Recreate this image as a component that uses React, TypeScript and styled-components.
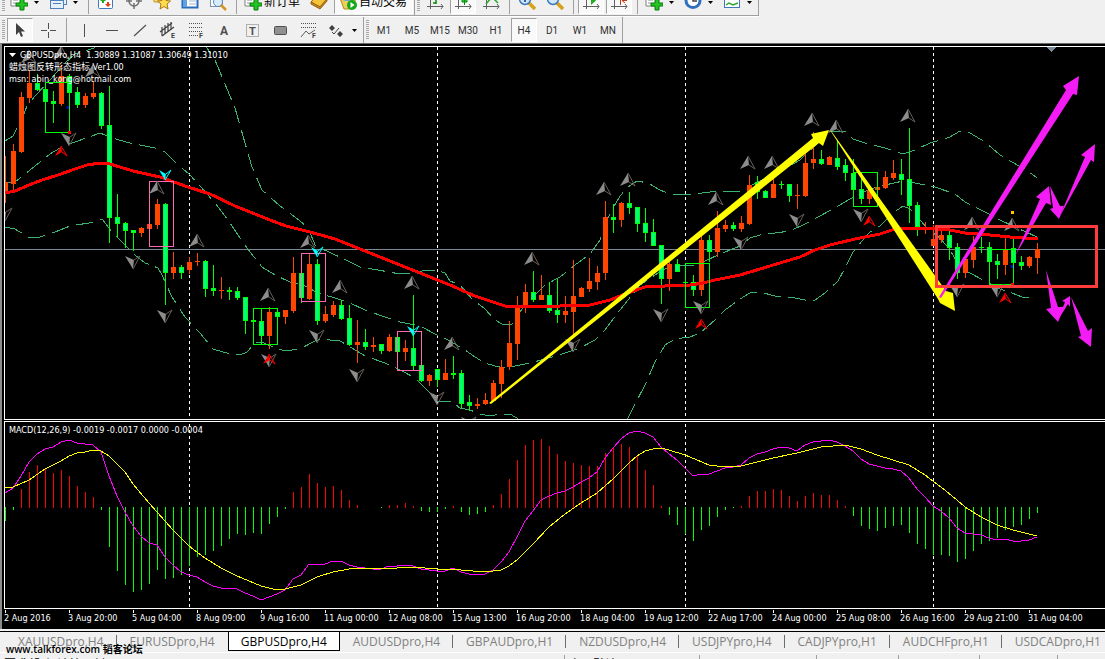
import React from "react";
import styled, { createGlobalStyle, css } from "styled-components";

const GlobalStyle = createGlobalStyle`
  * { box-sizing: border-box; }
  html, body, #root { height: 100%; }
  body {
    margin: 0;
    overflow: hidden;
    background: #f0f0f0;
    font-family: Roboto, "Noto Sans CJK SC", sans-serif;
    font-size: 10px;
    line-height: 13px;
  }
  button { font: inherit; color: inherit; border: 0; padding: 0; margin: 0; background: none; }
  svg { display: block; }
`;

const Page = styled.div`
  display: flex;
  flex-direction: column;
  min-height: 100%;
`;

const ToolbarRow = styled.div<{ $clipped?: boolean }>`
  display: flex;
  align-items: ${(p) => (p.$clipped ? "flex-end" : "stretch")};
  height: ${(p) => (p.$clipped ? 17 : 26)}px;
  overflow: hidden;
`;

const ToolGroup = styled.div`
  display: flex;
  flex: none;
  height: 26px;
  padding: 1px 0 1px 2px;
  border-right: 1px solid #a0a0a0;
`;

const StandardBars = styled.div`
  display: flex;
  flex: none;
  border-bottom: 1px solid #a0a0a0;
  box-shadow: 0 1px 0 #ffffff;
  margin-bottom: 1px;
`;

const Grip = styled.span`
  flex: none;
  width: 3px;
  margin: 2px 1px 2px 0;
  background: repeating-linear-gradient(#a8a8a8 0 1px, #f0f0f0 1px 2px);
`;

const Divider = styled.span`
  flex: none;
  width: 1px;
  margin: 0 3px 0 4px;
  background: #a0a0a0;
`;

const ToolButton = styled.button<{ $width?: number; $pressed?: boolean; $wide?: boolean }>`
  display: flex;
  flex: none;
  align-items: center;
  justify-content: ${(p) => (p.$wide ? "flex-start" : "center")};
  gap: 2px;
  width: ${(p) => (p.$wide ? "auto" : `${p.$width ?? 28}px`)};
  padding: ${(p) => (p.$wide ? "0 5px 0 4px" : "0")};
  color: #000000;
  font-size: 12px;
  white-space: nowrap;
  ${(p) =>
    p.$pressed &&
    css`
      width: ${p.$wide ? "auto" : "26px"};
      margin: 0 1px;
      background: #f9f9f9;
      border: 1px solid #a0a0a0;
      border-right-color: #ffffff;
      border-bottom-color: #ffffff;
    `}
`;

const PeriodButton = styled(ToolButton)`
  font-size: 10px;
  color: #303030;
`;

const CaretButton = styled.button`
  display: flex;
  flex: none;
  align-items: center;
  width: 13px;
  padding-left: 2px;
`;

const ChartFrame = styled.main`
  display: flex;
  flex-direction: column;
  gap: 1px;
  padding: 2px 0 0 2px;
  border-top: 1px solid #696969;
  border-left: 2px solid #8c8c8c;
  background: #000000;
  color: #ffffff;
  font-family: "DejaVu Sans Condensed", "Noto Sans CJK SC", sans-serif;
  font-size: 9px;
`;

const Pane = styled.section<{ $height: number }>`
  position: relative;
  height: ${(p) => p.$height}px;
  border: 1px solid #ffffff;
  border-right: 0;
  overflow: hidden;
`;

const Plot = styled.svg`
  width: 100%;
  height: 100%;
`;

const PaneCaption = styled.div`
  position: absolute;
  top: 2px;
  left: 4px;
  white-space: pre;
`;

const CaptionLine = styled.div`
  display: flex;
  align-items: center;
  gap: 4px;
  height: 12px;
`;

const TimeAxis = styled.div`
  display: flex;
  height: 19px;
  overflow: hidden;
`;

const TimeLabel = styled.span`
  flex: none;
  width: 64px;
  padding-top: 2px;
  white-space: nowrap;
  background: linear-gradient(#ffffff, #ffffff) 1px 0 / 1px 3px no-repeat;
`;

const TabStrip = styled.nav`
  position: relative;
  display: flex;
  height: 22px;
  margin-top: 2px;
  padding-left: 5px;
  border-top: 1px solid #000000;
  border-bottom: 1px solid #ffffff;
`;

const Tab = styled.button<{ $active?: boolean; $divided?: boolean }>`
  position: relative;
  flex: none;
  height: 19px;
  padding: 0 13px;
  font-family: "Open Sans", sans-serif;
  font-size: 12px;
  line-height: 19px;
  white-space: nowrap;
  color: #808080;
  ${(p) =>
    p.$divided &&
    css`
      background: linear-gradient(#6d6d6d, #6d6d6d) 100% 3px / 1px 13px no-repeat;
    `}
  ${(p) =>
    p.$active &&
    css`
      color: #000000;
      background: #ffffff;
      border: 1px solid #000000;
      border-top: 0;
      padding: 0 12px;
    `}
`;

const Watermark = styled.span`
  position: absolute;
  left: 6px;
  top: 10px;
  color: #000000;
  font-family: "Open Sans", "Noto Sans CJK SC", sans-serif;
  font-size: 10px;
  font-weight: 600;
  line-height: 14px;
  white-space: nowrap;
`;

const StatusBar = styled.footer`
  display: flex;
  height: 7px;
  padding-top: 2px;
  overflow: hidden;
  color: #000000;
  font-size: 12px;
  line-height: 20px;
`;

const StatusCell = styled.span<{ $width: number }>`
  flex: none;
  width: ${(p) => p.$width}px;
  height: 18px;
  padding-left: 4px;
  border-right: 1px solid #a0a0a0;
  white-space: nowrap;
`;

/* ---------- chart data ---------- */

const STEP = 8;
const FIRST_X = 5;

type Candle = [dir: "u" | "d", top: number, bottom: number, high: number, low: number];

const candles: Candle[] = [
  ["u",182,193,156,203],["u",151,184,144,191],["u",97,152,92,153],["u",83,98,70,103],
  ["d",83,90,74,91],["d",89,102,85,103],["d",101,104,91,123],["u",76,104,65,106],
  ["d",76,93,74,100],["d",92,105,87,108],["u",96,105,93,108],["u",93,97,81,99],
  ["d",93,126,92,129],["d",125,218,86,243],["d",217,224,194,237],["d",223,231,222,248],
  ["d",230,233,230,251],["u",228,233,227,237],["u",224,229,215,230],["u",204,225,199,229],
  ["d",204,273,203,305],["u",267,273,252,279],["d",267,273,265,279],["u",262,270,257,274],
  ["u",261,262,253,266],["d",261,289,260,297],["d",288,291,265,296],["u",290,291,277,299],
  ["d",290,292,287,300],["d",291,298,287,300],["d",297,321,297,334],["d",320,322,318,324],
  ["d",321,336,309,344],["u",312,336,307,349],["d",312,317,310,318],["u",310,317,310,324],
  ["u",273,311,257,313],["d",273,298,273,303],["u",264,299,253,300],["d",264,321,259,325],
  ["u",314,321,306,323],["u",305,315,301,317],["d",305,319,300,320],["d",318,345,305,346],
  ["u",342,345,320,363],["d",342,347,329,350],["u",345,347,337,352],["d",344,351,344,354],
  ["u",337,351,334,352],["d",337,352,336,353],["u",348,352,340,361],["d",348,366,295,370],
  ["d",365,381,364,382],["u",375,381,374,386],["d",369,380,369,387],["u",373,380,359,380],
  ["d",373,375,356,379],["d",373,404,370,408],["d",402,406,395,411],["u",404,406,398,409],
  ["u",400,404,393,405],["u",383,401,380,402],["u",367,384,360,398],["u",343,367,321,370],
  ["u",307,344,296,360],["u",292,306,284,313],["d",292,300,271,302],["u",295,300,275,300],
  ["d",295,311,282,313],["d",310,315,279,323],["u",311,315,296,323],["u",296,312,260,337],
  ["u",288,297,287,297],["u",281,289,258,292],["u",273,282,266,290],["u",217,273,201,280],
  ["d",217,220,204,233],["u",203,220,202,227],["d",203,208,192,214],["d",207,224,207,232],
  ["d",223,233,208,242],["d",232,246,219,246],["d",245,279,245,304],["u",264,279,262,291],
  ["d",264,272,259,272],["d",282,283,280,284],["d",282,290,275,296],["u",240,290,236,296],
  ["d",240,252,235,262],["u",228,252,211,257],["u",225,229,220,232],["d",225,229,222,231],
  ["u",223,229,216,232],["u",185,224,175,225],["d",182,192,176,199],["d",191,198,190,198],
  ["u",184,198,172,198],["d",184,185,181,189],["d",184,196,184,202],["u",195,196,184,209],
  ["u",163,196,150,197],["u",159,163,132,169],["d",159,164,150,165],["u",157,165,156,165],
  ["d",158,167,140,170],["d",165,173,159,181],["d",173,190,159,199],["d",189,199,173,204],
  ["u",190,199,190,204],["u",187,190,187,190],["u",177,188,171,189],["u",173,178,160,180],
  ["d",174,180,159,195],["d",179,206,128,223],["d",205,227,202,236],["u",227,228,222,234],
  ["u",239,246,225,246],["u",235,240,230,243],["d",235,248,231,260],["d",247,273,243,279],
  ["u",259,273,255,278],["u",247,260,236,268],["d",247,248,237,253],["d",247,262,242,264],
  ["d",261,265,254,279],["u",249,265,238,275],["d",248,263,238,280],["d",262,266,256,270],
  ["u",257,266,256,268],["u",249,258,243,274],
];

const ZERO = 507;

const histogram = [
  521,510,489,472,465,468,473,470,476,486,492,497,510,547,571,585,592,590,584,570,579,578,575,566,
  557,555,551,546,539,534,535,533,534,524,517,509,492,487,474,483,487,486,490,500,505,507,507,508,
  505,505,503,506,511,512,512,509,506,512,515,514,512,505,494,479,460,445,440,439,446,454,461,463,
  465,466,466,453,448,444,447,456,470,485,506,515,525,534,541,530,526,517,510,508,506,496,491,491,
  489,490,496,501,496,493,495,495,500,506,516,526,529,531,528,526,525,533,544,549,555,555,556,562,
  559,551,544,541,538,530,527,525,519,513,
];

const macdLine = [
  493,488,476,462,454,449,447,442,440,443,444,445,452,476,496,512,526,536,543,545,557,565,572,575,
  577,582,586,588,588,589,593,596,600,597,594,590,579,575,564,565,564,561,561,565,567,568,569,569,
  566,566,565,566,569,570,571,571,568,572,574,575,574,570,562,552,537,521,511,500,496,493,491,487,
  482,478,472,458,448,439,433,431,433,437,447,454,460,468,476,474,474,471,468,467,465,458,454,452,
  449,447,448,451,445,442,441,440,442,446,451,459,464,466,468,469,471,478,489,497,506,511,518,528,
  533,534,535,538,540,539,541,541,540,537,
];

const signalLine =
  "5,487 13,487 29,480 45,469 61,461 69,456 77,453 85,452 93,450 101,451 109,456 125,472 133,484 149,503 157,512 173,530 189,546 205,558 221,568 237,576 261,586 277,590 285,589 301,585 317,577 333,572 349,569 365,568 381,569 397,568 413,567 437,569 461,570 485,572 501,570 509,566 517,560 533,544 549,527 565,514 581,503 597,493 613,479 629,463 637,456 645,451 653,449 661,448 669,450 685,455 709,465 717,466 741,466 757,462 773,458 797,453 821,447 845,445 861,449 877,455 893,460 909,465 925,475 941,487 957,500 965,507 981,517 997,525 1013,530 1037,536";

const movingAverage =
  "5,193 15,191 29,185 42,180 58,175 75,169 87,165 100,163 110,164 133,171 160,177 188,187 210,194 235,206 260,216 270,220 286,226 310,232 335,239 365,251 400,265 425,275 450,285 475,296 490,301 505,306 530,306 560,306 590,305 610,300 625,294 645,287 665,286 690,285 703,283 715,280 740,275 760,269 780,263 800,257 815,250 830,245 855,239 880,234 895,229 910,228 925,228 950,230 965,233 990,235 1010,237 1025,238 1038,239";

const bands = [
  "5,141 13,136 21,121 27,106 35,96 50,80 65,63 75,54 94,48 100,40",
  "200,40 207,48 215,60 225,84 235,108 245,143 252,167 262,190 280,206 299,220 308,228 316,247 327,251 350,262 360,267 378,270 400,274 415,273 425,270 435,270 445,273 450,281 460,285 472,299 485,309 495,320 502,324 512,324 517,315 530,300 545,285 560,277 575,265 590,254 600,240 607,220 613,208 620,196 628,187 637,181 648,183 660,190 670,194 695,194 710,192 740,191 760,181 780,172 800,160 815,146 830,131 845,131 853,139 865,143 885,148 903,154 915,150 930,143 950,137 960,131 970,133 985,142 1000,155 1012,162 1028,171 1037,178",
  "5,183 15,182 25,174 35,166 50,154 65,145 75,142 100,133 112,138 130,143 155,148 165,152 175,162 190,175 200,186 215,203 228,220 240,238 250,252 262,267 275,275 290,282 305,286 318,293 335,298 350,303 365,310 385,317 400,322 420,326 435,334 450,341 465,350 475,357 485,363 495,366 505,368 515,366 530,363 545,359 565,353 580,348 595,340 605,330 620,310 640,285 655,275 665,269 680,266 695,265 705,261 720,254 740,246 750,238 760,235 790,231 805,224 820,216 840,205 855,196 870,189 885,185 903,181 915,183 935,187 955,194 965,202 985,212 1000,220 1015,227 1037,237",
  "5,227 15,229 28,237 40,237 55,232 70,226 95,222 102,219 112,232 125,245 135,255 145,263 158,268 162,275 172,297 185,317 200,333 213,349 230,354 240,355 247,352 255,343 262,342 275,348 285,351 300,349 313,342 320,339 340,341 352,348 365,356 385,363 400,370 415,378 430,393 437,401 452,402 460,408 470,410 480,414 490,416 500,414 510,414 520,420",
  "627,420 635,404 645,385 655,362 665,345 675,339 690,337 700,333 715,320 725,310 740,299 750,293 760,292 775,296 795,298 805,300 815,300 825,293 838,281 845,268 853,252 862,241 870,232 880,226 893,213 903,206 910,209 920,220 928,229 940,238 950,250 957,262 968,272 985,281 1000,289 1012,293 1022,297 1032,298",
];

const upMarks = [
  [29,50],[61,46],[93,64],[157,181],[197,234],[268,288],[308,235],[340,280],[412,276],[452,337],
  [532,252],[604,182],[628,173],[716,192],[748,156],[772,156],[812,113],[836,120],[908,109],
  [972,217],[1012,218],
];
const downMarks = [
  [5,221],[69,146],[133,269],[165,323],[269,367],[317,343],[357,382],[437,405],[469,430],[573,352],
  [661,322],[701,314],[741,250],[797,227],[861,222],[957,297],[997,297],
];
const redMarks = [[61,146],[269,354],[701,319],[869,216],[1005,293]];
const cyanMarks = [[165,180],[317,257],[413,336]];

const patternBoxes: [number, number, number, number, string][] = [
  [45,82,24,50,"#00ff00"],
  [149,181,24,65,"#ff69b4"],
  [253,308,24,36,"#00ff00"],
  [301,253,24,48,"#ff69b4"],
  [397,331,24,39,"#ff69b4"],
  [685,263,24,44,"#00ff00"],
  [853,172,24,34,"#00ff00"],
  [989,249,24,35,"#00ff00"],
];

const sessionLines = [189, 437, 685, 933];

const yellowArrows = [
  "489,403 813,138 811,134 829,130 823,146 819,143 491,404",
  "830,130 938,299 940,303 955,311 953,293 946,291 832,132",
];

const magentaArrows = [
  "939,297 1066,90 1063,86 1079,76 1077,95 1073,94 941,298",
  "1015,256 1040,199 1036,197 1049,186 1051,205 1046,203",
  "1050,186 1053,208 1050,209 1059,219 1064,206 1060,206",
  "1059,218 1085,157 1081,155 1095,144 1094,162 1091,160",
  "1046,270 1051,308 1046,309 1058,322 1064,307 1058,307",
  "1058,320 1065,302 1062,301 1070,296 1070,307 1068,304",
  "1071,297 1081,336 1078,337 1091,347 1092,328 1088,331",
];

const timeLabels = [
  "2 Aug 2016","3 Aug 20:00","5 Aug 04:00","8 Aug 09:00","9 Aug 16:00","11 Aug 00:00","12 Aug 08:00",
  "15 Aug 13:00","16 Aug 20:00","18 Aug 04:00","19 Aug 12:00","22 Aug 17:00","24 Aug 00:00",
  "25 Aug 08:00","26 Aug 16:00","29 Aug 21:00","31 Aug 04:00",
];

const symbolTabs = [
  "XAUUSDpro,H4","EURUSDpro,H4","GBPUSDpro,H4","AUDUSDpro,H4","GBPAUDpro,H1","NZDUSDpro,H4",
  "USDJPYpro,H4","CADJPYpro,H1","AUDCHFpro,H1","USDCADpro,H1",
];

const periods = ["M1", "M5", "M15", "M30", "H1", "H4", "D1", "W1", "MN"];

const toX = (i: number) => FIRST_X + STEP * i;

/* ---------- chart parts ---------- */

function SessionLines({ from, to }: { from: number; to: number }) {
  return (
    <>
      {sessionLines.map((x) => (
        <line key={x} x1={x + 0.5} x2={x + 0.5} y1={from} y2={to} stroke="#fff" strokeDasharray="3 3" />
      ))}
    </>
  );
}

function FractalMark({ x, y, down }: { x: number; y: number; down?: boolean }) {
  return (
    <g transform={`translate(${x} ${y}) scale(1 ${down ? -1 : 1})`} shapeRendering="auto">
      <path d="M0 0 L-8 13 L1 9 Z" fill="#8c8c8c" />
      <path d="M0 0 L7 13 L1 9" fill="none" stroke="#6a6058" />
    </g>
  );
}

function SmallMark({ x, y, color, down }: { x: number; y: number; color: string; down?: boolean }) {
  return (
    <g transform={`translate(${x} ${y}) scale(1 ${down ? -1 : 1})`} shapeRendering="auto">
      <path d="M0 0 L-6 10 L1 6 Z" fill={color} />
      <path d="M0 0 L6 10 L1 6" fill="none" stroke={color} />
    </g>
  );
}

function PricePlot() {
  return (
    <Plot role="img" aria-label="GBPUSDpro H4 price chart" shapeRendering="crispEdges">
      <g transform="translate(-5 -47)">
        <SessionLines from={47} to={419} />
        <rect x="5" y="249" width="100%" height="1" fill="#778899" />
        {bands.map((points) => (
          <polyline key={points} points={points} fill="none" stroke="#3cb371" strokeDasharray="18 7" />
        ))}
        {candles.map(([dir, top, bottom, high, low], i) => {
          const x = toX(i);
          const line = dir === "u" ? "#ff4500" : "#00ff00";
          const height = Math.max(1, bottom - top);
          return (
            <g key={x}>
              <rect x={x} y={high} width="1" height={low - high} fill={line} />
              <rect x={x - 2} y={top} width="5" height={height} fill={line} />
              {dir === "d" && height > 2 && (
                <rect x={x - 1} y={top + 1} width="3" height={height - 2} fill="#00ff7f" />
              )}
            </g>
          );
        })}
        <polyline points={movingAverage} fill="none" stroke="#ff0000" strokeWidth="3" />
        {patternBoxes.map(([x, y, w, h, color]) => (
          <rect key={x} x={x + 0.5} y={y + 0.5} width={w} height={h} fill="none" stroke={color} />
        ))}
        {upMarks.map(([x, y]) => (
          <FractalMark key={x} x={x} y={y} />
        ))}
        {downMarks.map(([x, y]) => (
          <FractalMark key={x} x={x} y={y} down />
        ))}
        {redMarks.map(([x, y]) => (
          <SmallMark key={x} x={x} y={y} color="#ff0000" />
        ))}
        {cyanMarks.map(([x, y]) => (
          <SmallMark key={x} x={x} y={y} color="#00ffff" down />
        ))}
        <rect x="67" y="106" width="2" height="3" fill="#0000ff" />
        <rect x="68" y="131" width="3" height="3" fill="#ff0000" />
        <rect x="1011" y="265" width="2" height="3" fill="#0000ff" />
        <rect x="1011" y="283" width="3" height="2" fill="#ff0000" />
        <rect x="1011" y="211" width="3" height="3" fill="#ffc800" />
        <path d="M1047 47 H1056 L1051.5 52 Z" fill="#778899" />
        <g shapeRendering="auto">
          {yellowArrows.map((points) => (
            <polygon key={points} points={points} fill="#ffff00" />
          ))}
          {magentaArrows.map((points) => (
            <polygon key={points} points={points} fill="#f41cf4" />
          ))}
        </g>
        <rect x="936.5" y="226.5" width="160" height="60" fill="none" stroke="#ff3b3b" strokeWidth="3" />
      </g>
    </Plot>
  );
}

function MacdPlot() {
  return (
    <Plot role="img" aria-label="MACD indicator" shapeRendering="crispEdges">
      <g transform="translate(-5 -422)">
        <SessionLines from={424} to={608} />
        {histogram.map((y, i) =>
          y > ZERO ? (
            <rect key={i} x={toX(i)} y={ZERO} width="1" height={y - ZERO} fill="#00ff00" />
          ) : y < ZERO ? (
            <rect key={i} x={toX(i)} y={y} width="1" height={ZERO + 1 - y} fill="#ff0000" />
          ) : null
        )}
        <polyline
          points={macdLine.map((y, i) => `${toX(i)},${y}`).join(" ")}
          fill="none"
          stroke="#ff00ff"
        />
        <polyline points={signalLine} fill="none" stroke="#ffff00" />
      </g>
    </Plot>
  );
}

/* ---------- toolbar icons ---------- */

const Svg = ({ children, w = 18, h = 18 }: { children: React.ReactNode; w?: number; h?: number }) => (
  <svg width={w} height={h} viewBox={`0 0 ${w} ${h}`} aria-hidden="true">
    {children}
  </svg>
);

const plus = (
  <path d="M10 6 h4 v4 h4 v3 h-4 v4 h-4 v-4 h-4 v-3 h4 z" fill="#22c522" stroke="#0a7a0a" strokeWidth="1" />
);

const NewChartIcon = () => (
  <Svg>
    <path d="M1 0 H12 V13 H1 Z" fill="#fff" stroke="#808080" />
    <path d="M3 4 h7 M3 7 h5 M3 10 h3" stroke="#909090" />
    {plus}
  </Svg>
);
const WindowsIcon = () => (
  <Svg>
    <rect x="4.5" y="2.5" width="13" height="9" fill="#e6f0fb" stroke="#4f81bd" />
    <rect x="1.5" y="7.5" width="13" height="8" fill="#e6f0fb" stroke="#4f81bd" />
    <path d="M4 10.500 h8" stroke="#4f81bd" />
  </Svg>
);
const MarketIcon = () => (
  <Svg>
    <rect x="1.500" y="0" width="14" height="15.500" rx="1" fill="#fff" stroke="#3f78bd" />
    <path d="M6 5 l3 3 h-2 v2 h-2 v-2 h-2 z" fill="#1fae1f" />
    <path d="M11 14 l-3 -3 h2 v-2 h2 v2 h2 z" fill="#e23b12" />
    <path d="M11 3 l2 2 l-2 2 l-2 -2 z" fill="#e23b12" />
  </Svg>
);
const TargetIcon = () => (
  <Svg>
    <circle cx="9" cy="8" r="5" fill="none" stroke="#707070" strokeWidth="1.500" />
    <path d="M9 0 V6 M9 10 V16 M1 8 H7 M11 8 H17" stroke="#707070" strokeWidth="1.500" />
  </Svg>
);
const StarIcon = () => (
  <Svg>
    <path d="M0 0 H9 V9 H1 Z" fill="#f7d774" stroke="#c49a2a" />
    <path d="M11 3 l2 4.500 4.500 .5 -3.500 3 1 5 -4 -2.500 -4 2.500 1 -5 -3.500 -3 4.500 -.5 z" fill="#fddc4e" stroke="#a87812" />
  </Svg>
);
const DataIcon = () => (
  <Svg>
    <rect x="1.500" y="0" width="15" height="14.500" fill="#fff" stroke="#2b6cb8" strokeWidth="2" />
    <path d="M4 0 V14" stroke="#5fa3e6" strokeWidth="4" />
    <path d="M8 5 h7 M8 8 h7 M8 11 h7" stroke="#9cb8d6" />
  </Svg>
);
const TesterIcon = () => (
  <Svg>
    <rect x="1.500" y="0" width="12" height="13.500" fill="#fff" stroke="#7a94b5" />
    <circle cx="9" cy="9" r="4.500" fill="#d7ecff" stroke="#5d86b5" />
    <path d="M12 12 l5 5" stroke="#d6961c" strokeWidth="2.500" />
  </Svg>
);
const BookIcon = () => (
  <Svg>
    <path d="M1 9 L8 1 L17 6 L10 14 Z" fill="#f3c33a" stroke="#9b6410" />
    <path d="M1 9 v2 l9 5 l7 -8 v-2 l-7 8 z" fill="#c98a1d" stroke="#9b6410" />
  </Svg>
);
const ExpertIcon = () => (
  <Svg>
    <path d="M1 5 H17 L13 16 H5 Z" fill="#f0cf57" stroke="#b58a1c" />
    <ellipse cx="9" cy="5" rx="8" ry="3" fill="#6aa5dc" />
    <circle cx="13" cy="12" r="5" fill="#17a81b" />
    <path d="M11.500 9 L15.500 12 L11.500 15 Z" fill="#fff" />
  </Svg>
);
const AxisIcon = ({ kind }: { kind: "bar" | "candle" | "line" | "scroll" | "shift" }) => (
  <Svg>
    <path d="M4.500 0 V16 M1 13.500 H17 M15 11 l2 2.500 l-2 2.500" fill="none" stroke="#606060" />
    {kind === "bar" && <path d="M10 0 V11 M10 2 H13 M7 10 H10" stroke="#0a8a0a" strokeWidth="1.500" />}
    {kind === "candle" && <path d="M10.500 0 V12 M8 0 h5 v9 h-5 z" fill="#1fce3a" stroke="#0a8a0a" />}
    {kind === "line" && <path d="M4 11 L10 4 L16 10" fill="none" stroke="#2ca62c" strokeWidth="1.500" />}
    {kind === "scroll" && <path d="M9 3 L14 7.500 L9 12 Z" fill="#1fae1f" />}
    {kind === "shift" && <path d="M10.500 0 V12 M12 7.500 H17 M15 5 L12 7.500 L15 10" fill="none" stroke="#c33c10" />}
  </Svg>
);
const LensIcon = ({ zoomIn }: { zoomIn?: boolean }) => (
  <Svg>
    <path d="M11 10 l6 6" stroke="#d6a21c" strokeWidth="3.500" />
    <circle cx="7" cy="6" r="5.500" fill="#cfe6fb" stroke="#3f78bd" strokeWidth="1.500" />
    <path d={zoomIn ? "M4 6 H10 M7 3 V9" : "M4 6 H10"} stroke="#2b66a8" strokeWidth="2" />
  </Svg>
);
const ClockIcon = () => (
  <Svg>
    <circle cx="9" cy="7.500" r="7" fill="#fff" stroke="#2f6fbe" strokeWidth="3" />
    <path d="M9 3 V8 H13" fill="none" stroke="#444" strokeWidth="1.500" />
  </Svg>
);
const TemplateIcon = () => (
  <Svg>
    <rect x="1.500" y="0" width="15" height="14.500" fill="#fff" stroke="#3f78bd" />
    <path d="M3 6 L7 5 L10 3 L15 3" fill="none" stroke="#b83020" strokeWidth="1.500" />
    <path d="M3 12 L6 10 L10 12 L15 10" fill="none" stroke="#2ca62c" strokeWidth="1.500" />
  </Svg>
);

const CursorIcon = () => (
  <Svg>
    <path d="M5 2 V14 L8 11 L10 16 L12 15 L10 10.500 H14 Z" fill="#404040" />
  </Svg>
);
const CrosshairIcon = () => (
  <Svg>
    <path d="M9.500 2 V8 M9.500 11 V17 M2 9.500 H8 M11 9.500 H17" stroke="#505050" />
  </Svg>
);
const VLineIcon = () => <Svg><path d="M9.500 3 V16" stroke="#505050" /></Svg>;
const HLineIcon = () => <Svg><path d="M3 9.500 H15" stroke="#505050" /></Svg>;
const TrendIcon = () => <Svg><path d="M3 15 L15 4" stroke="#505050" strokeWidth="1.200" /></Svg>;
const subLetter = { fontSize: 7, fontWeight: 700, fill: "#404040", fontFamily: "Roboto, sans-serif" };
const ChannelIcon = () => (
  <Svg>
    <path d="M1 11 L13 2 M3 15 L15 6 M3 6 V15 M6 4 V13 M9 2 V11 M12 1 V9" stroke="#404040" strokeWidth="1.200" />
    <text x="12" y="17" {...subLetter}>E</text>
  </Svg>
);
const FiboIcon = () => (
  <Svg>
    <path d="M2 2.500 H16 M2 6.500 H16 M2 10.500 H16 M2 14.500 H11" stroke="#505050" strokeDasharray="1 1" />
    <text x="12" y="17" {...subLetter}>F</text>
  </Svg>
);
const TextIcon = () => (
  <Svg><text x="5" y="14" fontSize="12" fontWeight="700" fill="#505050">A</text></Svg>
);
const LabelIcon = () => (
  <Svg>
    <rect x="3.500" y="3.500" width="12" height="12" fill="none" stroke="#707070" strokeDasharray="1 1" />
    <text x="6" y="14" fontSize="11" fontWeight="700" fill="#505050">T</text>
  </Svg>
);
const RectIcon = () => (
  <Svg><rect x="3.500" y="5.500" width="12" height="8" rx="1" fill="#909090" stroke="#505050" /></Svg>
);
const FiboTrendIcon = () => (
  <Svg>
    <path d="M2 2.500 H17 M2 6.500 H17" stroke="#505050" strokeDasharray="1 1" />
    <path d="M2 16 L7 10 L10 13 L16 9" fill="none" stroke="#606060" />
    <text x="13" y="17" {...subLetter}>F</text>
  </Svg>
);
const ShapesIcon = () => (
  <Svg>
    <path d="M5 4 l3 3 l-3 3 l-3 -3 z M13 10 l3 3 l-3 3 l-3 -3 z" fill="#404040" />
    <path d="M5 11 l2 2 l5 -6" fill="none" stroke="#404040" />
  </Svg>
);
const Caret = () => (
  <CaretButton aria-label="More">
    <Svg w={5} h={3}><path d="M0 0 H5 L2.500 3 Z" fill="#000" /></Svg>
  </CaretButton>
);

const drawingTools: [string, () => React.ReactElement][] = [
  ["Vertical line", VLineIcon],
  ["Horizontal line", HLineIcon],
  ["Trendline", TrendIcon],
  ["Channel", ChannelIcon],
  ["Fibonacci", FiboIcon],
  ["Text", TextIcon],
  ["Text label", LabelIcon],
  ["Rectangle", RectIcon],
  ["Fibonacci expansion", FiboTrendIcon],
  ["Shapes", ShapesIcon],
];

export default function App() {
  return (
    <Page>
      <GlobalStyle />
      <ToolbarRow $clipped>
        <StandardBars>
          <ToolGroup>
            <Grip />
            <ToolButton $width={26} aria-label="New chart"><NewChartIcon /></ToolButton>
            <Caret />
            <ToolButton $width={26} aria-label="Profiles"><WindowsIcon /></ToolButton>
            <Caret />
            <Divider />
            <ToolButton aria-label="Market watch"><MarketIcon /></ToolButton>
            <ToolButton aria-label="Data window"><TargetIcon /></ToolButton>
            <ToolButton aria-label="Navigator"><StarIcon /></ToolButton>
            <ToolButton aria-label="Terminal"><DataIcon /></ToolButton>
            <ToolButton aria-label="Strategy tester"><TesterIcon /></ToolButton>
            <Divider />
            <ToolButton $wide><NewChartIcon />新订单</ToolButton>
            <ToolButton aria-label="Editor"><BookIcon /></ToolButton>
            <ToolButton $wide $pressed><ExpertIcon />自动交易</ToolButton>
          </ToolGroup>
          <ToolGroup>
            <Grip />
            <ToolButton aria-label="Bars"><AxisIcon kind="bar" /></ToolButton>
            <ToolButton $pressed aria-label="Candlesticks"><AxisIcon kind="candle" /></ToolButton>
            <ToolButton aria-label="Line"><AxisIcon kind="line" /></ToolButton>
            <Divider />
            <ToolButton aria-label="Zoom in"><LensIcon zoomIn /></ToolButton>
            <ToolButton aria-label="Zoom out"><LensIcon /></ToolButton>
            <Divider />
            <ToolButton $pressed aria-label="Auto scroll"><AxisIcon kind="scroll" /></ToolButton>
            <ToolButton $pressed aria-label="Chart shift"><AxisIcon kind="shift" /></ToolButton>
            <Divider />
            <ToolButton $width={26} aria-label="Indicators"><NewChartIcon /></ToolButton>
            <Caret />
            <ToolButton $width={26} aria-label="Periods"><ClockIcon /></ToolButton>
            <Caret />
            <ToolButton $width={26} aria-label="Templates"><TemplateIcon /></ToolButton>
            <Caret />
          </ToolGroup>
        </StandardBars>
      </ToolbarRow>
      <ToolbarRow>
        <ToolGroup>
          <Grip />
          <ToolButton $pressed aria-label="Cursor"><CursorIcon /></ToolButton>
          <ToolButton aria-label="Crosshair"><CrosshairIcon /></ToolButton>
          <Divider />
          {drawingTools.map(([name, Icon]) => (
            <ToolButton key={name} aria-label={name}><Icon /></ToolButton>
          ))}
          <Caret />
        </ToolGroup>
        <ToolGroup>
          <Grip />
          {periods.map((period) => (
            <PeriodButton key={period} $pressed={period === "H4"}>{period}</PeriodButton>
          ))}
        </ToolGroup>
      </ToolbarRow>

      <ChartFrame>
        <Pane $height={374}>
          <PricePlot />
          <PaneCaption>
            <CaptionLine>
              <Svg w={7} h={4}><path d="M0 0 H7 L3.500 4 Z" fill="#fff" /></Svg>
              GBPUSDpro,H4  1.30889 1.31087 1.30649 1.31010
            </CaptionLine>
            <CaptionLine>蜡烛图反转形态指标 Ver1.00</CaptionLine>
            <CaptionLine>msn: abin_kong@hotmail.com</CaptionLine>
          </PaneCaption>
        </Pane>
        <Pane $height={188}>
          <MacdPlot />
          <PaneCaption>MACD(12,26,9) -0.0019 -0.0017 0.0000 -0.0004</PaneCaption>
        </Pane>
        <TimeAxis>
          {timeLabels.map((label) => (
            <TimeLabel key={label}>{label}</TimeLabel>
          ))}
        </TimeAxis>
      </ChartFrame>

      <TabStrip>
        {symbolTabs.map((symbol, i) => (
          <Tab key={symbol} $active={i === 2} $divided={i !== 1 && i !== 2}>{symbol}</Tab>
        ))}
        <Watermark>www.talkforex.com 韬客论坛</Watermark>
      </TabStrip>
      <StatusBar>
        <StatusCell $width={565}>要求帮助, 请按F1键</StatusCell>
        <StatusCell $width={135}>窗口默认</StatusCell>
        <StatusCell $width={117} />
        <StatusCell $width={82} />
        <StatusCell $width={81} />
        <StatusCell $width={78} />
      </StatusBar>
    </Page>
  );
}
